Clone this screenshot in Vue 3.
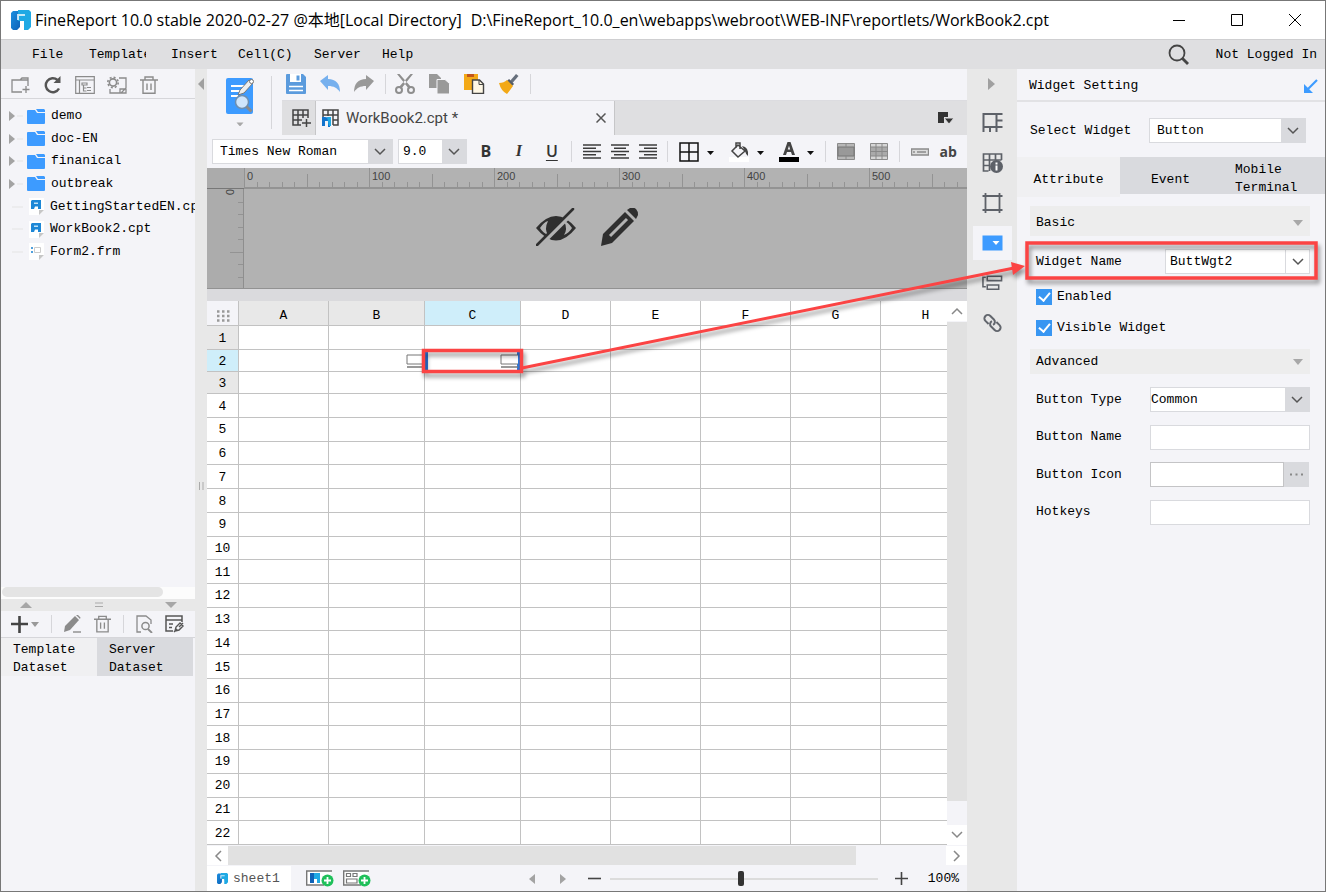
<script setup>
import { ref } from 'vue'

const menus = ['File', 'Template', 'Insert', 'Cell(C)', 'Server', 'Help']
const folders = ['demo', 'doc-EN', 'finanical', 'outbreak']
const files = [
  { name: 'GettingStartedEN.cpt', icon: 'i-cpt' },
  { name: 'WorkBook2.cpt', icon: 'i-cpt' },
  { name: 'Form2.frm', icon: 'i-frm' },
]
const columns = ['A', 'B', 'C', 'D', 'E', 'F', 'G', 'H']
const rows = Array.from({ length: 22 }, (_, i) => i + 1)
const hTicks = Array.from({ length: 58 }, (_, i) => i)
const vTicks = Array.from({ length: 7 }, (_, i) => i + 1)
const tick = (i) => (i % 10 === 0 ? 0 : i % 5 === 0 ? 6 : 14)

const treeTools = [
  { label: 'New folder', icon: 'i-newfolder' },
  { label: 'Refresh', icon: 'i-refresh' },
  { label: 'Locate', icon: 'i-locate' },
  { label: 'Manage', icon: 'i-manage' },
  { label: 'Delete', icon: 'i-trash' },
]
const sideTools = [
  { label: 'Cell element', icon: 'i-cellel' },
  { label: 'Cell attribute', icon: 'i-cellattr' },
  { label: 'Float element', icon: 'i-float' },
  { label: 'Widget setting', icon: 'i-widget', on: true },
  { label: 'Condition', icon: 'i-cond' },
  { label: 'Hyperlink', icon: 'i-link' },
]

const family = ref('Times New Roman')
const size = ref('9.0')
const widget = ref('Button')
const widgetName = ref('ButtWgt2')
const enabled = ref(true)
const visible = ref(true)
const buttonType = ref('Common')
const buttonName = ref('')
const buttonIcon = ref('')
const hotkeys = ref('')
const zoom = ref(49)
</script>

<template>
  <div class="window">
    <svg class="defs" aria-hidden="true">
      <defs>
        <linearGradient id="g-left" x1="0" y1="0" x2="1" y2="1">
          <stop offset="0" stop-color="#1b8fe0" /><stop offset="1" stop-color="#0e62b8" />
        </linearGradient>
      </defs>
      <symbol id="i-logo" viewBox="0 0 20 20">
        <path d="M7 0h11l2 2v15l-3 3h-4v-9H7z" fill="#1fa9e4" />
        <path d="M2 1h5v10h2v6l-3 3H2l-2-2V3z" fill="url(#g-left)" />
        <path d="M6 4h8v2H8v4H6z" fill="#fff" opacity=".75" />
        <path d="M9 13h4v7H7l2-2z" fill="#fff" />
      </symbol>
      <symbol id="i-chev" viewBox="0 0 12 8">
        <path d="m1 1 5 5 5-5" fill="none" stroke="currentColor" stroke-width="1.5" />
      </symbol>
      <symbol id="i-folder" viewBox="0 0 18 15">
        <path d="M0 2q0-1 1-1h7l2 3h8v10q0 1-1 1H1q-1 0-1-1z" fill="#3d9bff" />
        <path d="M9 0h8l1 1v2h-7z" fill="#3d9bff" />
      </symbol>
      <symbol id="i-cpt" viewBox="0 0 15 17">
        <path d="M0 0h15v12l-5 5H0z" fill="#fff" /><path d="M15 12l-5 5v-5z" fill="#c6c6c6" />
        <path d="M3 2h9v9H9V8.500H6L5 11H2V3z" fill="#1d87d6" /><path d="M5 4.500h4v1.500H5z" fill="#bfe2f8" />
      </symbol>
      <symbol id="i-frm" viewBox="0 0 15 17">
        <path d="M0 0h15v12l-5 5H0z" fill="#fff" /><path d="M15 12l-5 5v-5z" fill="#c6c6c6" />
        <path d="M2 4h2v2H2zM2 8h2v2H2z" fill="#4fa0dd" /><path d="M5.500 4.500h6v5h-6z" fill="none" stroke="#ccc" />
      </symbol>
      <symbol id="i-newfolder" viewBox="0 0 20 18">
        <path d="M11 16H1V4h8l2-2h6v8M9 4h8M15 10v7M11.500 13.500h7" fill="none" stroke="#8b8b8b" stroke-width="1.300" />
      </symbol>
      <symbol id="i-refresh" viewBox="0 0 18 18">
        <path d="M15 12.500A7 7 0 1 1 13.500 4" fill="none" stroke="#555" stroke-width="2.400" /><path d="M16.500 0v7h-7z" fill="#555" />
      </symbol>
      <symbol id="i-locate" viewBox="0 0 20 18">
        <path d="M.7.7h18.600v16.600H.7zM1 4h18M4.500 4v13M7 7h5v2H7zM8.500 9v6h3M8.500 12h3M12 11.500h4M12 14.500h4" fill="none" stroke="#8b8b8b" stroke-width="1.200" />
      </symbol>
      <symbol id="i-manage" viewBox="0 0 20 18">
        <circle cx="6" cy="6.500" r="3.600" fill="none" stroke="#8b8b8b" stroke-width="1.600" />
        <circle cx="6" cy="6.500" r="5.200" fill="none" stroke="#8b8b8b" stroke-width="1.600" stroke-dasharray="2 2.080" />
        <path d="M12 2h7v10M3 13v4h10M13 17v-4h6v4zM14 17l5-5" fill="none" stroke="#8b8b8b" stroke-width="1.300" />
      </symbol>
      <symbol id="i-trash" viewBox="0 0 18 18">
        <path d="M0 4h18M5 4V1h8v3M3 4v13.300h12V4M7 7.500v6.500M11 7.500v6.500" fill="none" stroke="#8b8b8b" stroke-width="1.400" />
      </symbol>
      <symbol id="i-cellel" viewBox="0 0 20 20">
        <path d="M20 1H1v18M1 14h13V1M14 7.500h6M14 14h6M7.500 14v5M14 14v5" fill="none" stroke="#5d6168" stroke-width="2" />
      </symbol>
      <symbol id="i-cellattr" viewBox="0 0 20 20">
        <path d="M6 18H1V1h18v6M1 7h18M1 12.500h6M7 1v17M13 1v6" fill="none" stroke="#5d6168" stroke-width="1.700" />
        <circle cx="14" cy="13.500" r="6.500" fill="#5d6168" /><path d="M14 9.500v2M14 12.500v5" stroke="#fff" stroke-width="2" />
      </symbol>
      <symbol id="i-float" viewBox="0 0 20 20">
        <path d="M0 3h20M0 17h20M3 0v20M17 0v20" fill="none" stroke="#5d6168" stroke-width="1.800" />
      </symbol>
      <symbol id="i-widget" viewBox="0 0 20 20">
        <path d="M0 2.500h20v15H0z" fill="#3d9bff" /><path d="M10 8h7l-3.500 4z" fill="#fff" />
      </symbol>
      <symbol id="i-cond" viewBox="0 0 22 20">
        <path d="M5.500 3h15v4.500h-15zM5.500 12h12v4.500h-12zM4 4H1v10h3" fill="none" stroke="#5d6168" stroke-width="1.600" />
      </symbol>
      <symbol id="i-link" viewBox="0 0 20 20">
        <g transform="rotate(45 10 10)" fill="none" stroke="#62666d" stroke-width="2">
          <path d="M8 13.500H3.500a3.500 3.500 0 0 1 0-7H8.500a3.500 3.500 0 0 1 3.300 4.500" />
          <path d="M12 6.500h4.500a3.500 3.500 0 0 1 0 7h-5a3.500 3.500 0 0 1-3.300-4.500" />
        </g>
      </symbol>
    </svg>

    <header class="titlebar">
      <svg class="logo"><use href="#i-logo" /></svg>
      <span>FineReport 10.0 stable 2020-02-27 @本地[Local Directory]</span>
      <span class="path">D:\FineReport_10.0_en\webapps\webroot\WEB-INF\reportlets/WorkBook2.cpt</span>
      <div class="winbtns">
        <button aria-label="Minimize"><svg width="12" height="12"><path d="M0 6.500h12" stroke="#000" /></svg></button>
        <button aria-label="Maximize"><svg width="12" height="12"><path d="M.5.5h11v11H.5z" stroke="#000" fill="none" /></svg></button>
        <button aria-label="Close"><svg width="12" height="12"><path d="m0 0 12 12M12 0 0 12" stroke="#000" /></svg></button>
      </div>
    </header>

    <nav class="menubar">
      <div class="menus"><button v-for="m in menus" :key="m"><span>{{ m }}</span></button></div>
      <button aria-label="Search" class="search">
        <svg width="22" height="21"><circle cx="9" cy="9" r="7.500" fill="none" stroke="#444" stroke-width="1.800" /><path d="m14 14 6 6" stroke="#444" stroke-width="2.800" /></svg>
      </button>
      <button class="login">Not Logged In</button>
    </nav>

    <div class="body">
      <aside class="left">
        <div class="tree-tools">
          <button v-for="t in treeTools" :key="t.label" :aria-label="t.label"><svg width="20" height="18"><use :href="'#' + t.icon" /></svg></button>
        </div>
        <div class="tree">
          <ul>
            <li v-for="f in folders" :key="f">
              <svg class="twist" width="16" height="10"><path d="M0 0v10l6-5z" fill="#a3a3a3" /><path d="M8 5h6" stroke="#e4e4e4" /></svg>
              <svg class="fold" width="18" height="15"><use href="#i-folder" /></svg>{{ f }}
            </li>
            <li v-for="f in files" :key="f.name">
              <svg class="twist" width="16" height="10"><path d="M3 5h11" stroke="#e4e4e4" /></svg>
              <svg class="doc" width="15" height="17"><use :href="'#' + f.icon" /></svg>{{ f.name }}
            </li>
          </ul>
        </div>
        <div class="tree-scroll"><i></i></div>
        <div class="split">
          <svg width="12" height="6"><path d="M0 6h12L6 0z" fill="#a6a6a6" /></svg>
          <svg width="8" height="6"><path d="M0 1h8M0 4.500h8" stroke="#aaa" /></svg>
          <svg width="12" height="6"><path d="M0 0h12L6 6z" fill="#a6a6a6" /></svg>
        </div>
        <div class="ds-tools">
          <button aria-label="Add dataset"><svg width="28" height="18"><path d="M0 9h17M8.500 1v17" stroke="#444" stroke-width="2.600" /><path d="M20 7h8l-4 5z" fill="#999" /></svg></button>
          <i class="sep"></i>
          <button aria-label="Edit dataset"><svg width="18" height="18"><path d="m0 17 1-6L11 1l4 4L6 15z" fill="#8b8b8b" /><path d="m12 0 1.500-.5 3 3-.5 1.500z" fill="#8b8b8b" /><path d="M9 17h8" stroke="#8b8b8b" stroke-width="1.400" /></svg></button>
          <button aria-label="Delete dataset"><svg width="17" height="18"><use href="#i-trash" /></svg></button>
          <i class="sep"></i>
          <button aria-label="Preview dataset"><svg width="17" height="18"><path d="M5 17H1V1h9l5 4v4" fill="none" stroke="#8b8b8b" stroke-width="1.300" /><circle cx="9.500" cy="11" r="3.600" fill="none" stroke="#8b8b8b" stroke-width="1.500" /><path d="m12 14 4 4" stroke="#8b8b8b" stroke-width="1.800" /></svg></button>
          <button aria-label="Connections"><svg width="19" height="18"><path d="M8 16H1V1h16v6M1 5h16M4 9h4M4 12.500h3" fill="none" stroke="#555" stroke-width="1.500" /><path d="m10 16 1-4 4-4 3 3-4 4zM14 12l4-4M9 17l3-3" fill="none" stroke="#555" stroke-width="1.400" /></svg></button>
        </div>
        <div class="ds-tabs">
          <button class="on">Template Dataset</button>
          <button>Server Dataset</button>
        </div>
      </aside>

      <div class="gutter">
        <svg width="7" height="12"><path d="M6 0v12L0 6z" fill="#a0a0a0" /></svg>
        <svg width="5" height="8"><path d="M.5 0v8M4 0v8" stroke="#aaa" /></svg>
      </div>

      <main class="center">
        <div class="top">
          <div class="preview">
            <button aria-label="Preview">
              <svg width="30" height="50">
                <rect y="2" width="27" height="36" rx="2" fill="#3d9bff" />
                <path d="M5 10h15M5 15h11M5 20h7" stroke="#fff" stroke-width="2" />
                <path d="m12 19 2-5 9-10 4 3-9 10z" fill="#eee" stroke="#777" />
                <circle cx="25.500" cy="5.500" r="2" fill="#fff" stroke="#777" />
                <circle cx="16" cy="26" r="6.500" fill="#cfe5fb" stroke="#6e8fb0" stroke-width="1.500" /><path d="m20.500 30.500 5 5" stroke="#8a8a8a" stroke-width="3" />
                <path d="M10.500 46.500h7l-3.500 4z" fill="#a8a8a8" />
              </svg>
            </button>
          </div>
          <div class="top-right">
            <div class="tools">
              <button aria-label="Save"><svg width="20" height="20"><path d="M0 1q0-1 1-1h16l3 3v16q0 1-1 1H1q-1 0-1-1z" fill="#5b9bdd" /><path d="M4 0h11v8H4z" fill="#fff" /><path d="M10.500 1.500h3v5h-3z" fill="#5b9bdd" /><path d="M3 12.500h14M3 16.500h14" stroke="#fff" stroke-width="1.600" /></svg></button>
              <button aria-label="Undo"><svg width="20" height="18"><path d="M0 6 8 0v4c8 0 12 5 12 13-3-4-6-6-12-6v4z" fill="#76b0ee" /></svg></button>
              <button aria-label="Redo"><svg width="20" height="18"><path d="m20 6-8-6v4C4 4 0 9 0 17c3-4 6-6 12-6v4z" fill="#999" /></svg></button>
              <i class="sep"></i>
              <button aria-label="Cut"><svg width="20" height="20"><path d="M2 0h2.500L16 13l-2 2zM18 0h-2.500L4 13l2 2z" fill="#8e8e8e" /><circle cx="4" cy="16" r="3" fill="none" stroke="#8e8e8e" stroke-width="2" /><circle cx="16" cy="16" r="3" fill="none" stroke="#8e8e8e" stroke-width="2" /></svg></button>
              <button aria-label="Copy"><svg width="21" height="20"><path d="M0 0h8l4 4v10H0z" fill="#999" /><path d="M8 5.500h8l4.500 4V20H8z" fill="#999" stroke="#f4f4f8" /></svg></button>
              <button aria-label="Paste"><svg width="21" height="20"><path d="M0 0h14v16H0z" fill="#f3a917" /><path d="M3 0h7v3H3z" fill="#c2551b" /><path d="M8.500 6h7l4 4v9.500h-11z" fill="#fff8e6" stroke="#444" stroke-width="1.400" /><path d="M15 6v4.500h4" fill="none" stroke="#444" /></svg></button>
              <button aria-label="Format painter"><svg width="20" height="20"><path d="m11 7 6-7 2.500 2-6 7z" fill="#666f7c" /><path d="m9 6 5 5" stroke="#555c68" stroke-width="3" /><path d="M0 9q5 0 8-3l6 6q-2 3-6 8Q2 17 0 9z" fill="#f3a917" /></svg></button>
              <i class="sep"></i>
            </div>
            <div class="tabs">
              <button class="newtab" aria-label="New template"><svg width="20" height="18"><path d="M9 16H1V1h15v8M1 6h15M1 11h9M6 1v15M11 1v8M14.500 10v8M10 14h9" fill="none" stroke="#444" stroke-width="1.500" /></svg></button>
              <div class="tab">
                <svg width="17" height="18"><path d="M1 8V1h15v15h-5M1 6h15M6 1v6M11 1v15M11 11h5" fill="none" stroke="#444" stroke-width="1.500" /><path d="M0 8h3l5 1v9H6v-6H3v5H0z" fill="#1273cc" /><path d="M5 8h4v9H7z" fill="#1fa9e4" /></svg>
                <span>WorkBook2.cpt *</span>
                <button aria-label="Close tab"><svg width="10" height="10"><path d="m.5.5 9 9M9.500.5l-9 9" stroke="#555" stroke-width="1.500" /></svg></button>
              </div>
              <button class="tablist" aria-label="Template list"><svg width="16" height="13"><path d="M0 0h10v5H6v6H0z" fill="#333" /><path d="M6 6h10l-5 6z" fill="#333" stroke="#dfdfe1" /></svg></button>
            </div>
          </div>
        </div>

        <div class="format">
          <div class="fonts">
            <label class="combo font"><select v-model="family" aria-label="Font"><option>Times New Roman</option></select><span><svg width="12" height="8"><use href="#i-chev" /></svg></span></label>
            <label class="combo size"><select v-model="size" aria-label="Size"><option>9.0</option></select><span><svg width="12" height="8"><use href="#i-chev" /></svg></span></label>
          </div>
          <div class="faces">
            <button class="fb" aria-label="Bold"><b>B</b></button>
            <button class="fb" aria-label="Italic"><b class="it">I</b></button>
            <button class="fb" aria-label="Underline"><b class="un">U</b></button>
          </div>
          <i class="sep"></i>
          <div class="aligns">
            <button aria-label="Align left"><svg width="18" height="15"><path d="M0 1h18M0 4.250h13M0 7.500h18M0 10.750h13M0 14h18" stroke="#3c3c3c" stroke-width="1.300" /></svg></button>
            <button aria-label="Align center"><svg width="18" height="15"><path d="M0 1h18M3 4.250h12M0 7.500h18M3 10.750h12M0 14h18" stroke="#3c3c3c" stroke-width="1.300" /></svg></button>
            <button aria-label="Align right"><svg width="18" height="15"><path d="M0 1h18M5 4.250h13M0 7.500h18M5 10.750h13M0 14h18" stroke="#3c3c3c" stroke-width="1.300" /></svg></button>
          </div>
          <i class="sep"></i>
          <div class="paints">
            <button aria-label="Border"><svg width="35" height="20"><path d="M1 1h18v18H1zM10 1v18M1 10h18" fill="none" stroke="#111" stroke-width="1.500" /><path d="M28 9h7l-3.500 4z" fill="#111" /></svg></button>
            <button aria-label="Fill color"><svg width="35" height="20"><path d="M0 15h20v5H0z" fill="#fff" /><path d="m9 3 7 6-7 6-6-6zM7 6V1h4v6" fill="#f4f4f8" stroke="#444" stroke-width="1.500" /><path d="M13 4q7 1 6 10-2-1-3-5z" fill="#444" /><path d="M28 9h7l-3.500 4z" fill="#111" /></svg></button>
            <button aria-label="Font color"><svg width="35" height="20"><path d="m4 13 4.500-13h3L16 13h-3l-1-3H8l-1 3zM8.800 7.500h2.400L10 3.800z" fill="#444" /><path d="M0 15h20v5H0z" fill="#000" /><path d="M28 9h7l-3.500 4z" fill="#111" /></svg></button>
          </div>
          <i class="sep"></i>
          <div class="merges">
            <button aria-label="Merge"><svg width="18" height="17"><path d="M.5.5h17v16H.5z" fill="#b7b7b7" stroke="#8b8b8b" /><path d="M1 4h16v9H1z" fill="#999" stroke="#777" /><path d="M9 0v4M9 13v4" stroke="#888" /></svg></button>
            <button aria-label="Unmerge"><svg width="18" height="17"><path d="M.5.5h17v16H.5z" fill="#d6d6d6" stroke="#8b8b8b" /><path d="M1 4h16v9H1z" fill="#aaa" /><path d="M6 0v17M12 0v17M0 4h18M0 8.500h18M0 13h18" stroke="#888" /></svg></button>
          </div>
          <i class="sep"></i>
          <button aria-label="Widget"><svg width="18" height="8"><path d="M.5 1h17v6H.5zM3 3v2M6 4h9" fill="#ddd" stroke="#8b8b8b" stroke-width="1.400" /></svg></button>
          <button class="ab" aria-label="Text">ab</button>
        </div>

        <div class="canvas">
          <div class="corner"></div>
          <div class="hruler">
            <svg width="722" height="21"><path v-for="i in hTicks" :key="i" :d="`M${Math.round(i * 12.5)}.5 ${tick(i)}V21`" stroke="#939393" /></svg>
            <div class="nums"><span v-for="n in 6" :key="n">{{ (n - 1) * 100 }}</span></div>
          </div>
          <div class="vruler">
            <svg width="20" height="99"><path v-for="i in vTicks" :key="i" :d="`M${tick(i)} ${Math.round(i * 12.5)}.5H20`" stroke="#939393" /></svg>
            <span>0</span>
          </div>
          <div class="stage">
            <button aria-label="Hide parameter pane"><svg width="40" height="38"><path d="M0 20Q20-4 40 20 20 45 0 20z" fill="#2f2f2f" /><path d="M4 20q4-6 8-7-4 8 0 14-5-2-8-7zM36 20q-4-6-8-7 4 8 0 14 5-2 8-7z" fill="#b2b2b2" /><path d="M3 38 39 2" stroke="#b2b2b2" stroke-width="5" /><path d="M1 37 37 1" stroke="#2f2f2f" stroke-width="2.600" stroke-linecap="round" /></svg></button>
            <button aria-label="Edit parameter pane"><svg width="38" height="38"><path d="m0 38 2-12L24 4l9 9-22 22z" fill="#2f2f2f" /><path d="m26 2 3-2q4-1 6 1t2 6l-2 4z" fill="#2f2f2f" /><path d="m9 28 17-17" stroke="#b2b2b2" stroke-width="3" /></svg></button>
          </div>
        </div>
        <div class="band"></div>

        <div class="sheet">
          <div class="grid">
            <table>
              <colgroup><col class="c0" /><col v-for="c in columns" :key="c" :class="{ wide: c === 'B' || c === 'C' }" /></colgroup>
              <thead>
                <tr>
                  <th class="all"><svg width="14" height="12"><path d="M1 1.500h14M1 6h14M1 10.500h14" stroke="#999" stroke-width="2.500" stroke-dasharray="2.500 2.500" /></svg></th>
                  <th v-for="(c, i) in columns" :key="c" scope="col" :class="{ sel: c === 'C', shade: i < 2 }">{{ c }}</th>
                </tr>
              </thead>
              <tbody>
                <tr v-for="r in rows" :key="r" :class="{ short: r === 2 || r === 3, first: r === 1 || r === 4 }">
                  <th scope="row" :class="{ sel: r === 2, shade: r === 1 || r === 3 }">{{ r }}</th>
                  <td v-for="c in columns" :key="c" :class="{ active: r === 2 && c === 'C' }">
                    <svg v-if="r === 2 && (c === 'B' || c === 'C')" width="18" height="14"><path d="M18 1H1v9h17" fill="#fff" stroke="#777" /><path d="M1 13h17" stroke="#777" stroke-width="1.500" /></svg>
                  </td>
                </tr>
              </tbody>
            </table>
          </div>
          <div class="vscroll">
            <button aria-label="Scroll up"><svg class="up" width="12" height="8"><use href="#i-chev" /></svg></button>
            <i></i>
            <button aria-label="Scroll down"><svg width="12" height="8"><use href="#i-chev" /></svg></button>
          </div>
        </div>
        <div class="hscroll">
          <button aria-label="Scroll left"><svg width="8" height="12"><path d="M7 1 2 6l5 5" fill="none" stroke="#888" stroke-width="1.500" /></svg></button>
          <div><i></i></div>
          <button aria-label="Scroll right"><svg width="8" height="12"><path d="m1 1 5 5-5 5" fill="none" stroke="#888" stroke-width="1.500" /></svg></button>
        </div>
        <footer class="status">
          <button class="sheet-tab"><svg width="11" height="11"><use href="#i-logo" /></svg>sheet1</button>
          <div class="adds">
            <button aria-label="Add sheet"><svg width="28" height="17"><path d="M26 1H.7v14H18" fill="#fff" stroke="#777" stroke-width="1.400" /><path d="M4 3h4v10H4z" fill="#0e62b8" /><path d="M8 3h6v10h-3V9H8z" fill="#1fa9e4" /><circle cx="21.500" cy="10.500" r="6" fill="#1fc05a" /><path d="M21.500 7v7M18 10.500h7" stroke="#fff" stroke-width="1.800" /></svg></button>
            <button aria-label="Add form sheet"><svg width="28" height="17"><path d="M26 1H.7v14H18" fill="#fff" stroke="#777" stroke-width="1.400" /><path d="M3.500 3.500h4v3h-4zM10 3.500h4v3h-4zM3.500 9h10.500v4H3.500z" fill="none" stroke="#777" stroke-width="1.200" /><circle cx="21.500" cy="10.500" r="6" fill="#1fc05a" /><path d="M21.500 7v7M18 10.500h7" stroke="#fff" stroke-width="1.800" /></svg></button>
          </div>
          <div class="zoom">
            <button aria-label="Previous sheet"><svg width="6" height="10"><path d="M6 0v10L0 5z" fill="#a3a3a3" /></svg></button>
            <button aria-label="Next sheet"><svg width="6" height="10"><path d="M0 0v10l6-5z" fill="#a3a3a3" /></svg></button>
            <button aria-label="Zoom out"><svg width="13" height="13"><path d="M0 6.500h13" stroke="#444" stroke-width="1.600" /></svg></button>
            <input v-model="zoom" type="range" aria-label="Zoom" />
            <button aria-label="Zoom in"><svg width="13" height="13"><path d="M0 6.500h13M6.500 0v13" stroke="#444" stroke-width="1.600" /></svg></button>
            <span>100%</span>
          </div>
        </footer>
      </main>

      <div class="strip">
        <button class="collapse" aria-label="Collapse"><svg width="8" height="12"><path d="M0 0v12l7-6z" fill="#a0a0a0" /></svg></button>
        <button v-for="t in sideTools" :key="t.label" :aria-label="t.label" :class="{ on: t.on }"><svg width="21" height="20"><use :href="'#' + t.icon" /></svg></button>
      </div>

      <aside class="right">
        <div class="r-head"><h2>Widget Setting</h2>
          <button aria-label="Pop out"><svg width="14" height="14"><path d="M13 1 4 10" stroke="#3d9bff" stroke-width="2.200" /><path d="M0 5v9h9z" fill="#3d9bff" /></svg></button>
        </div>
        <div class="r-select">
          <label for="w-sel">Select Widget</label>
          <div class="combo"><select id="w-sel" v-model="widget"><option>Button</option></select><span><svg width="12" height="8"><use href="#i-chev" /></svg></span></div>
        </div>
        <div class="r-tabs">
          <button class="on">Attribute</button><button>Event</button><button class="two">Mobile Terminal</button>
        </div>
        <div class="r-body">
          <button class="section basic">Basic<svg width="10" height="6"><path d="M0 0h10L5 6z" fill="#a8a8a8" /></svg></button>
          <div class="row name">
            <label for="w-name">Widget Name</label>
            <div class="combo plain"><select id="w-name" v-model="widgetName"><option>ButtWgt2</option></select><span><svg width="12" height="8"><use href="#i-chev" /></svg></span></div>
          </div>
          <label class="check"><input v-model="enabled" type="checkbox" />Enabled</label>
          <label class="check"><input v-model="visible" type="checkbox" />Visible Widget</label>
          <button class="section adv">Advanced<svg width="10" height="6"><path d="M0 0h10L5 6z" fill="#a8a8a8" /></svg></button>
          <div class="fields">
            <div class="row"><label for="b-type">Button Type</label>
              <div class="combo tight"><select id="b-type" v-model="buttonType"><option>Common</option></select><span><svg width="12" height="8"><use href="#i-chev" /></svg></span></div></div>
            <div class="row"><label for="b-name">Button Name</label><input id="b-name" v-model="buttonName" type="text" /></div>
            <div class="row"><label for="b-icon">Button Icon</label>
              <div class="pick"><input id="b-icon" v-model="buttonIcon" type="text" /><button aria-label="Choose icon"><svg width="14" height="3"><path d="M0 1.500h14" stroke="#888" stroke-width="2" stroke-dasharray="2 3.500" /></svg></button></div></div>
            <div class="row"><label for="b-hot">Hotkeys</label><input id="b-hot" v-model="hotkeys" type="text" /></div>
          </div>
        </div>
      </aside>
    </div>

    <svg class="notes" width="1326" height="892" aria-hidden="true">
      <g fill="none" stroke="#fb4444">
        <rect x="423.500" y="350.500" width="98" height="21" stroke-width="3.500" />
        <rect x="1027" y="243" width="289" height="35" stroke-width="3.500" />
        <path d="M522 368 1014 268" stroke-width="3" />
      </g>
      <path d="m1011 262 14 4-12 9z" fill="#fb4444" />
    </svg>
  </div>
</template>

<style>
html, body, #app { height: 100%; }
body { margin: 0; }
</style>

<style scoped>
* { box-sizing: border-box; }
.window { position: relative; display: flex; flex-direction: column; height: 100vh; overflow: hidden; border: 1px solid #777; background: #f4f4f8; color: #000; font: 13px/18px "Liberation Mono", "Noto Sans CJK SC", monospace; }
.defs { position: absolute; width: 0; height: 0; }
svg { display: block; flex: none; }
button { border: 0; padding: 0; background: none; font: inherit; color: inherit; display: flex; align-items: center; }
.sep { width: 1px; background: #d6d6da; align-self: stretch; }
.titlebar { display: flex; align-items: center; height: 38px; flex: none; background: #fff; color: #000; padding-left: 10px; font: 16px/20px "Open Sans", "Noto Sans CJK SC", sans-serif; white-space: pre; }
.logo { width: 20px; height: 20px; margin-right: 4px; }
.path { margin-left: 9px; }
.winbtns { margin-left: auto; display: flex; gap: 46px; padding-right: 24px; }
.menubar { display: flex; align-items: center; height: 30px; flex: none; background: #dfdfe1; border-top: 1px solid #cfcfd1; padding: 0 8px 0 31px; }
.menus { display: grid; grid-template-columns: 57px 82px 67px 76px 68px auto; }
.menus span { max-width: 57px; overflow: hidden; }
.search { margin-left: auto; margin-right: 26px; }
.body { flex: 1; display: flex; min-height: 0; }

.left { width: 194px; flex: none; display: flex; flex-direction: column; min-height: 0; }
.tree-tools { height: 30px; display: flex; align-items: center; gap: 12px; padding: 3px 0 0 10px; border-bottom: 1px solid #d6d6da; }
.tree { flex: 1; overflow: hidden; }
.tree ul { list-style: none; margin: 6px 0 0; padding: 0; display: grid; grid-auto-rows: 1fr; height: 158px; }
.tree li { display: flex; align-items: center; white-space: nowrap; padding-left: 8px; }
.twist { margin-right: 2px; }
.fold { margin-right: 6px; }
.doc { margin: 0 6px 0 2px; }
.tree-scroll { height: 12px; background: #fcfcfc; padding: 0 32px 0 1px; }
.tree-scroll i { display: block; height: 10px; border-radius: 5px; background: #e4e4e4; }
.split { height: 12px; background: #e8e8e8; display: flex; justify-content: space-between; align-items: center; padding: 0 18px 0 19px; }
.ds-tools { height: 27px; display: flex; align-items: center; padding: 4px 11px 4px 10px; border-bottom: 1px solid #d6d6da; justify-content: space-between; }
.ds-tabs { display: grid; grid-template-columns: 1fr 1fr; height: 253px; align-items: start; padding-right: 2px; }
.ds-tabs button { height: 38px; padding: 3px 12px 0; text-align: left; line-height: 18px; background: #d9dade; }
.ds-tabs .on { background: #f0f0f2; }
.gutter { width: 12px; flex: none; background: #e8e8e8; display: flex; flex-direction: column; align-items: center; padding-top: 9px; gap: 392px; }

.center { flex: 1; min-width: 0; display: flex; flex-direction: column; }
.top { display: flex; height: 66px; flex: none; }
.preview { width: 65px; margin: 7px 10px 6px 0; padding-left: 19px; border-right: 1px solid #d6d6da; }
.top-right { flex: 1; display: flex; flex-direction: column; min-width: 0; }
.tools { height: 32px; display: flex; align-items: center; gap: 14px; padding: 3px 0 4px 4px; border-bottom: 1px solid #dcdce0; }
.tools .sep { margin: 2px -5px 2px -3px; }
.tabs { flex: 1; display: flex; background: #dfdfe1; }
.newtab { width: 34px; padding-left: 10px; border-right: 1px solid #c6c6c8; }
.tab { width: 299px; display: flex; align-items: center; background: #f4f4f8; border-right: 1px solid #c6c6c8; padding: 0 8px 0 6px; font: 15px/20px Roboto, sans-serif; color: #444; }
.tab span { margin: 0 auto 0 7px; }
.tablist { margin-left: auto; padding-right: 13px; }
.format { height: 33px; flex: none; display: flex; align-items: center; padding: 0 10px 0 5px; justify-content: space-between; }
.format .sep { margin: 6px 0; }
.fonts { display: flex; gap: 5px; }
.faces { display: flex; gap: 17px; }
.combo { display: grid; grid-template-columns: minmax(0, 1fr) 24px; height: 25px; border: 1px solid #d9dade; background: #fff; color: #555; }
.combo select { grid-area: 1 / 1 / 2 / 3; appearance: none; border: 0; outline: 0; margin: 0; padding: 0 7px; background: none; font: inherit; color: #000; }
.combo span { grid-area: 1 / 2; display: grid; place-items: center; background: #d9dade; pointer-events: none; }
.font { width: 181px; }
.size { width: 69px; }
.size select { padding: 0 4px; }
.fb { width: 16px; justify-content: center; font: 16px/18px "Open Sans", sans-serif; color: #333; }
.fb b { line-height: 16px; padding-bottom: 2px; }
.fb .it { font-family: "Liberation Serif", serif; font-style: italic; }
.fb .un { text-decoration: underline; text-underline-offset: 3px; font-weight: 600; }
.aligns { display: flex; gap: 10px; }
.paints { display: flex; gap: 15px; }
.merges { display: flex; gap: 15px; }
.ab { font: bold 14px/18px "Open Sans", sans-serif; color: #444; }

.canvas { height: 121px; flex: none; display: grid; grid-template: 21px 1fr / 37px minmax(0, 1fr); background: #b2b2b2; border-bottom: 1px solid #929292; color: #444; font: 11px/16px "Liberation Sans", sans-serif; }
.corner { background: #ababab; border-bottom: 1px solid #777; }
.hruler { display: grid; overflow: hidden; border-bottom: 2px solid #939393; }
.hruler svg, .nums { grid-area: 1 / 1; }
.nums { display: grid; grid-template-columns: repeat(6, 125px); padding-left: 3px; }
.vruler { display: grid; grid-template-columns: 17px 20px; border-right: 1px solid #8e8e8e; background: #acacac; overflow: hidden; }
.vruler svg { grid-area: 1 / 2; }
.vruler span { grid-area: 1 / 2; writing-mode: vertical-rl; justify-self: start; line-height: 12px; }
.stage { display: flex; gap: 25px; justify-content: center; align-items: flex-start; padding: 19px 36px 0 0; }
.band { height: 12px; flex: none; background: #dadadd; }

.sheet { flex: 1; min-height: 0; display: flex; }
.grid { flex: 1; min-width: 0; overflow: hidden; background: #fff; }
table { border-collapse: separate; border-spacing: 0; table-layout: fixed; width: 764px; height: 100%; }
.c0 { width: 32px; }
col { width: 90px; }
.wide { width: 96px; }
th, td { padding: 0; border: 0 solid #c2c2c2; border-width: 0 1px 1px 0; font-weight: normal; line-height: 16px; overflow: hidden; }
th { padding-top: 2px; }
td { line-height: 14px; }
thead th { padding-top: 6px; }
thead tr { height: 25px; }
.first { height: 24px; }
.short { height: 22px; }
th.all { background: #f4f4f8; }
.all svg { margin: 0 auto; }
.shade { background: #e8e8e8; }
.sel { background: #cfeefa; }
td svg { margin-left: auto; }
.active { outline: 1px solid #2b78e0; box-shadow: inset 3px 0 #2b78e0, inset -3px 0 #2b78e0; }
.active svg { margin-right: 2px; }
.vscroll { width: 20px; flex: none; display: flex; flex-direction: column; color: #888; }
.vscroll button { height: 20px; justify-content: center; background: #fff; }
.vscroll i { flex: 1; background: #e1e1e1; margin: 1px 0 24px; }
.up { transform: rotate(180deg); }
.hscroll { height: 21px; flex: none; display: flex; padding: 1px 0; }
.hscroll button { width: 21px; justify-content: center; background: #fff; }
.hscroll div { flex: 1; }
.hscroll i { display: block; height: 100%; width: 628px; max-width: 100%; background: #e1e1e1; }
.status { height: 25px; flex: none; display: flex; align-items: center; }
.sheet-tab { width: 84px; height: 25px; background: #fff; gap: 5px; padding-left: 10px; color: #555; }
.adds { display: flex; gap: 9px; margin-left: 15px; }
.zoom { margin-left: auto; display: flex; align-items: center; padding-right: 8px; }
.zoom button:nth-child(2) { margin: 0 22px 0 25px; }
.zoom input { appearance: none; margin: 0 17px 0 9px; width: 268px; height: 20px; background: linear-gradient(#dcdcdc, #dcdcdc) center / 100% 2px no-repeat; }
.zoom input::-webkit-slider-thumb { appearance: none; width: 6px; height: 15px; border-radius: 2px; background: #333; }
.zoom span { margin-left: 20px; }

.strip { width: 50px; flex: none; background: #e8e8e8; display: flex; flex-direction: column; align-items: center; }
.strip button { width: 39px; height: 34px; margin-bottom: 6px; justify-content: center; }
.strip .collapse { height: 30px; margin-bottom: 7px; }
.strip .on { background: #f4f4f8; }

.right { width: 308px; flex: none; }
.r-head { height: 33px; display: flex; align-items: center; justify-content: space-between; padding: 2px 7px 0 12px; border-bottom: 2px solid #e2e2e5; }
h2 { margin: 0; font: inherit; }
.r-select { height: 55px; display: grid; grid-template-columns: 119px 157px; align-items: center; padding: 2px 0 0 13px; }
.r-tabs { display: grid; grid-template-columns: 103px 101px 1fr; height: 37px; background: #d9dade; }
.r-tabs button { justify-content: center; padding-top: 5px; }
.r-tabs .on { background: #f0f0f2; }
.r-tabs .two { padding: 4px 24px 0 14px; text-align: left; }
.r-body { padding: 12px 15px 0 13px; display: flex; flex-direction: column; }
.section { height: 30px; background: #ededed; justify-content: space-between; padding: 0 7px 0 6px; }
.basic { padding-top: 4px; }
.row { display: grid; grid-template-columns: 114px 1fr; align-items: center; padding-left: 6px; }
.name { grid-template-columns: 129px 1fr; margin: 13px 0 10px; }
.plain select { padding: 0 4px; }
.plain span { background: #fff; border-left: 1px solid #d9dade; }
.tight select { padding: 0; }
.check { display: flex; align-items: center; gap: 5px; height: 25px; margin-bottom: 6px; padding-left: 6px; }
.check input { appearance: none; margin: 0; width: 16px; height: 16px; background: #3896f2; display: grid; place-items: center; }
.check input:checked::before { content: ""; width: 5px; height: 9px; margin-bottom: 3px; border: solid #fff; border-width: 0 2px 2px 0; transform: rotate(40deg); }
.adv { height: 25px; margin-top: 3px; }
.fields { display: flex; flex-direction: column; justify-content: space-between; height: 138px; margin-top: 13px; }
.row input { width: 100%; height: 25px; border: 1px solid #d9dade; background: #fff; font: inherit; padding: 0 4px; outline: 0; }
.pick { display: grid; grid-template-columns: 1fr 25px; padding-right: 1px; }
.row .pick input { border-color: #c4c4c6; }
.pick button { background: #d9dade; justify-content: center; }
.notes { position: absolute; top: -1px; left: -1px; pointer-events: none; filter: drop-shadow(2px 4px 2px rgba(0, 0, 0, 0.4)); }
</style>
